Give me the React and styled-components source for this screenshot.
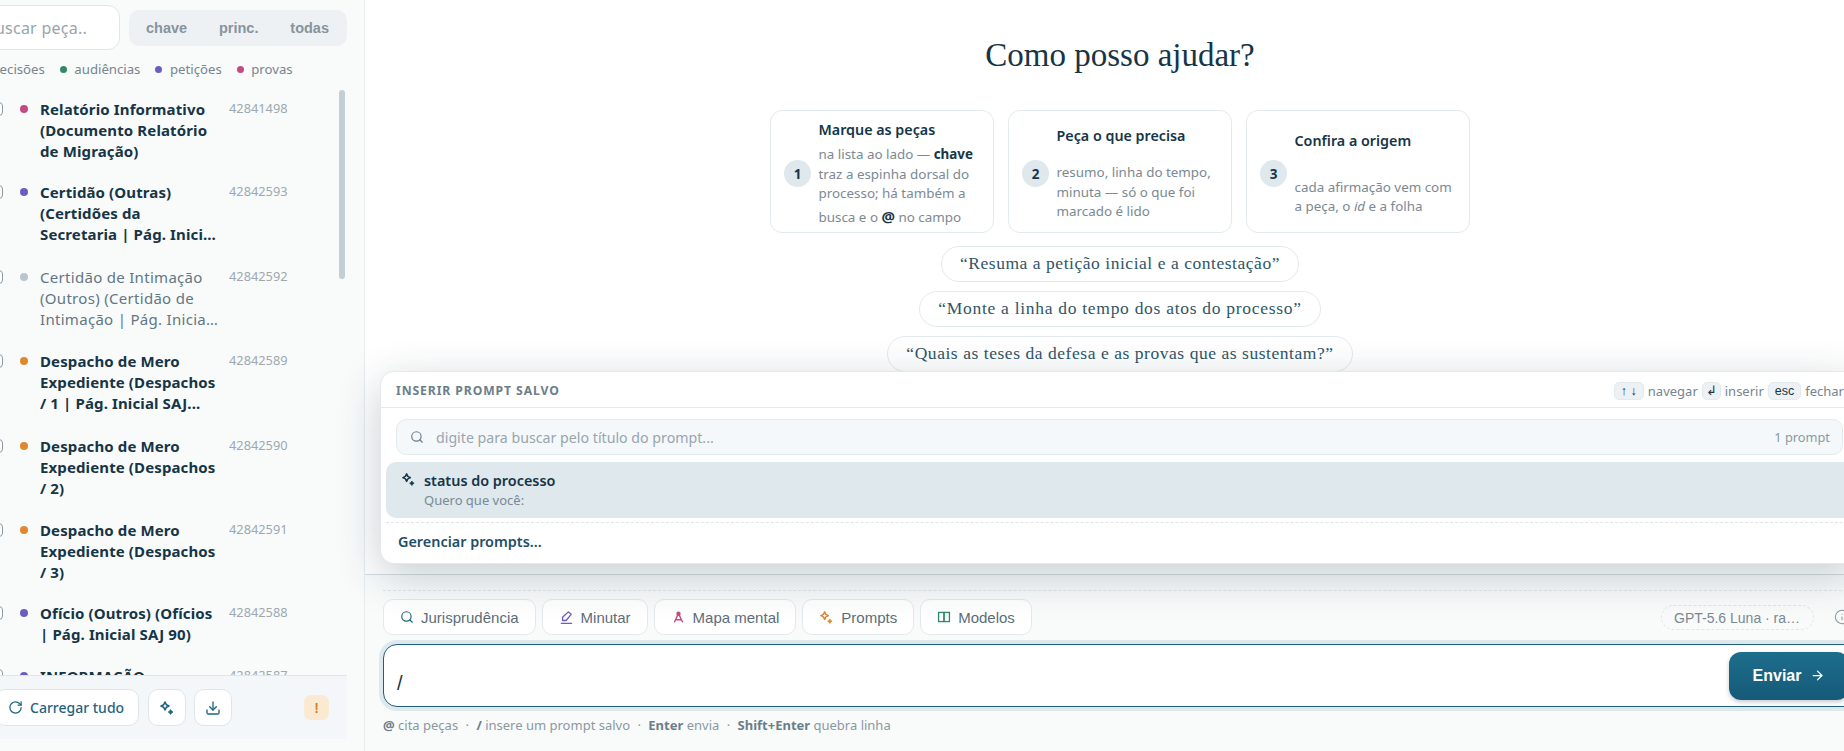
import React from "react";
import styled, { createGlobalStyle } from "styled-components";
import { Search, RotateCw, Download, ArrowRight, Info } from "lucide-react";

const PLEX = `"Noto Sans", "Liberation Sans", sans-serif`;
const ARIAL = `"Liberation Sans", Arial, sans-serif`;
const SERIF = `"Liberation Serif", "Times New Roman", serif`;

const Global = createGlobalStyle`
  html, body { margin: 0; padding: 0; width: 1844px; height: 751px; overflow: hidden; background: #fff; }
  * { box-sizing: border-box; }
`;

const Page = styled.div`
  display: flex;
  width: 1844px;
  height: 751px;
  overflow: hidden;
  font-family: ${PLEX};
  color: #163546;
`;

/* ---------- sidebar ---------- */
const Sidebar = styled.aside`
  flex: 0 0 400px;
  margin-left: -35px;
  height: 751px;
  display: flex;
  flex-direction: column;
  background: #f9fbfb;
  border-right: 1px solid #e6ebee;
  padding: 5px 17px 12px 0;
`;
const SideHead = styled.div`
  display: flex;
  align-items: center;
  gap: 9px;
  padding-left: 10px;
`;
const SearchBox = styled.div`
  width: 145px;
  height: 45px;
  background: #fff;
  border: 1px solid #dfe6ea;
  border-radius: 12px;
  display: flex;
  align-items: center;
  justify-content: flex-end;
  padding-right: 32px;
  font-size: 16px;
  letter-spacing: 0.25px;
  color: #98a5ae;
  white-space: nowrap;
`;
const Segments = styled.div`
  flex: 1;
  height: 36px;
  background: #eef1f4;
  border-radius: 10px;
  display: flex;
  align-items: center;
  justify-content: space-between;
  padding: 0 18px 0 17px;
`;
const Segment = styled.span`
  font-family: ${ARIAL};
  font-size: 14.5px;
  font-weight: 700;
  color: #87949e;
`;
const Legend = styled.div`
  display: flex;
  align-items: center;
  height: 20px;
  margin-top: 9px;
  padding-left: 12px;
  gap: 15px;
  white-space: nowrap;
`;
const LegendItem = styled.span`
  display: inline-flex;
  align-items: center;
  gap: 7.5px;
  font-size: 13.2px;
  color: #76858f;
`;
const Dot = styled.i`
  flex: none;
  display: block;
  width: ${(p) => p.$size || 8}px;
  height: ${(p) => p.$size || 8}px;
  border-radius: 50%;
  background: ${(p) => p.$color};
`;
const List = styled.div`
  position: relative;
  flex: 1;
  margin-top: 7px;
  overflow: hidden;
  min-height: 0;
`;
const Row = styled.div`
  display: grid;
  grid-template-columns: 31px 20px 189px auto;
  padding: 10px 0 0 24px;
  &:first-child { padding-top: 13px; }
  height: ${(p) => p.$h}px;
  align-items: start;
`;
const Check = styled.span`
  width: 14px;
  height: 14px;
  margin-top: 3px;
  border: 1.3px solid #8d99a1;
  border-radius: 4px;
  background: #fff;
`;
const RowDot = styled(Dot)`
  margin-top: 6px;
`;
const RowTitle = styled.div`
  font-size: 15px;
  letter-spacing: ${(p) => (p.$muted ? "0.3px" : "0.12px")};
  line-height: 21.1px;
  font-weight: ${(p) => (p.$muted ? 400 : 700)};
  color: ${(p) => (p.$muted ? "#627683" : "#163546")};
  padding-right: 8px;
  display: -webkit-box;
  -webkit-box-orient: vertical;
  -webkit-line-clamp: 3;
  overflow: hidden;
`;
const RowId = styled.div`
  font-size: 12.8px;
  line-height: 18px;
  color: #9ca9b1;
`;
const Thumb = styled.div`
  position: absolute;
  top: 4px;
  right: 2px;
  width: 6px;
  height: 189px;
  border-radius: 3px;
  background: #c3cfd6;
`;
const SideFoot = styled.div`
  flex: 0 0 64px;
  display: flex;
  align-items: center;
  gap: 8.5px;
  padding: 0 18px 0 30px;
  background: #f4f7f9;
  border-top: 1px solid #dfe6ea;
`;
const FootButton = styled.button`
  height: 37px;
  min-width: 38px;
  padding: 0 ${(p) => (p.$wide ? "14px 0 12px" : "0")};
  display: inline-flex;
  align-items: center;
  justify-content: center;
  gap: 7px;
  background: #fff;
  border: 1px solid #dfe6ea;
  border-radius: 10px;
  color: #1f6482;
  font-family: ${PLEX};
  font-size: 14px;
  font-weight: 500;
`;
const Warn = styled.span`
  width: 25px;
  height: 25px;
  margin-left: auto;
  border-radius: 7px;
  background: #fbe9d2;
  color: #d6852b;
  font-family: ${ARIAL};
  font-size: 14px;
  font-weight: 700;
  display: flex;
  align-items: center;
  justify-content: center;
`;

/* ---------- main ---------- */
const Main = styled.main`
  position: relative;
  flex: 0 0 1510px;
  height: 751px;
  display: flex;
  flex-direction: column;
  background: #fff;
`;
const Hero = styled.section`
  flex: 1;
  min-height: 0;
  display: flex;
  flex-direction: column;
  align-items: center;
  padding-top: 35px;
`;
const Title = styled.h1`
  margin: 0;
  font-family: ${SERIF};
  font-size: 33px;
  line-height: 40px;
  font-weight: 400;
  color: #163546;
`;
const Cards = styled.div`
  display: grid;
  grid-template-columns: repeat(3, 224px);
  gap: 14px;
  margin-top: 35px;
`;
const Card = styled.div`
  display: grid;
  grid-template-columns: 27px 1fr;
  column-gap: 7.5px;
  row-gap: 5px;
  align-items: center;
  padding: 9px 12px 4px 13px;
  border: 1px solid #e3eaee;
  border-radius: 12px;
  background: #fff;
`;
const CardNum = styled.span`
  grid-row: 1 / span 2;
  width: 27px;
  height: 27px;
  border-radius: 50%;
  background: #dee8ed;
  color: #163546;
  font-size: 13.5px;
  font-weight: 700;
  display: flex;
  align-items: center;
  justify-content: center;
`;
const CardTitle = styled.div`
  font-size: 14.3px;
  line-height: 20px;
  font-weight: 600;
  color: #163546;
`;
const CardBody = styled.div`
  font-size: 13.4px;
  line-height: 19.5px;
  color: #7a8993;
  b { color: #163546; font-weight: 700; }
  em { font-style: italic; }
`;
const At = styled.b`
  font-size: 15px;
  line-height: 24px;
`;
const Chips = styled.div`
  display: flex;
  flex-direction: column;
  align-items: center;
  gap: 9px;
  margin-top: 13px;
`;
const Chip = styled.div`
  height: 36px;
  padding: 0 18px;
  display: flex;
  align-items: center;
  border: 1px solid #e3eaee;
  border-radius: 18px;
  background: #fff;
  font-family: ${SERIF};
  font-size: 17.5px;
  letter-spacing: ${(p) => p.$track}px;
  color: #2f5668;
  white-space: nowrap;
`;

/* ---------- popup ---------- */
const Popup = styled.div`
  position: absolute;
  left: 15px;
  right: 16px;
  bottom: 187px;
  height: 193px;
  background: #fff;
  border: 1px solid #e3eaee;
  border-radius: 14px;
  box-shadow: 0 12px 44px rgba(20, 45, 60, 0.24);
  display: flex;
  flex-direction: column;
  z-index: 5;
`;
const PopHead = styled.div`
  flex: 0 0 36px;
  display: flex;
  align-items: center;
  justify-content: space-between;
  padding: 2px 14px 0 15px;
  border-bottom: 1px solid #e3eaee;
`;
const PopLabel = styled.div`
  font-size: 12.2px;
  font-weight: 700;
  letter-spacing: 0.9px;
  color: #6b7e8a;
`;
const Hints = styled.div`
  display: flex;
  align-items: center;
  gap: 4px;
  font-size: 13px;
  color: #748590;
`;
const Kbd = styled.kbd`
  height: 18px;
  padding: 0 ${(p) => p.$pad || 6}px;
  display: inline-flex;
  align-items: center;
  gap: 4px;
  background: #edf1f4;
  border: 1px solid #e3eaee;
  border-radius: 5px;
  font-family: ${ARIAL};
  font-size: 12.5px;
  color: #163546;
`;
const PopSearch = styled.div`
  flex: 0 0 36px;
  margin: 11px 15px 0 15px;
  display: flex;
  align-items: center;
  gap: 12px;
  padding: 0 12px 0 13px;
  background: #f5f8fa;
  border: 1px solid #e3eaee;
  border-radius: 10px;
  font-size: 14.2px;
  color: #98a5ae;
  svg { color: #6b7e8a; flex: none; }
`;
const Count = styled.span`
  margin-left: auto;
  font-size: 12.8px;
  color: #8a98a2;
`;
const PromptItem = styled.div`
  flex: 0 0 56px;
  margin: 7px 5px 0 5px;
  display: grid;
  grid-template-columns: 23px 1fr;
  padding: 9px 0 0 15px;
  background: #dee8ed;
  border-radius: 10px;
`;
const ItemIcon = styled.span`
  color: #163546;
  margin-top: 1px;
  line-height: 0;
`;
const ItemTitle = styled.div`
  font-size: 14.4px;
  line-height: 20px;
  font-weight: 600;
  color: #163546;
`;
const ItemSub = styled.div`
  font-size: 13px;
  line-height: 18px;
  color: #7a8993;
`;
const Manage = styled.div`
  flex: 1;
  margin: 4px 5px 0 5px;
  padding: 0 0 4px 12px;
  display: flex;
  align-items: center;
  border-top: 1px dashed #dfe6ea;
  font-size: 14.4px;
  font-weight: 600;
  color: #1f4f66;
`;

/* ---------- composer ---------- */
const Composer = styled.footer`
  flex: 0 0 177px;
  padding: 15px 18px 0;
  background: #f9fbfb;
  border-top: 1px solid #d4dce1;
  display: flex;
  flex-direction: column;
`;
const Tools = styled.div`
  border-top: 1px dashed #dfe6ea;
  padding-top: 8px;
  display: flex;
  align-items: flex-start;
  gap: 6px;
  height: 54px;
`;
const Tool = styled.button`
  height: 36px;
  padding: 0 16px;
  display: inline-flex;
  align-items: center;
  gap: 7px;
  background: #fff;
  border: 1px solid #e3eaee;
  border-radius: 10px;
  font-family: ${ARIAL};
  font-size: 15px;
  color: #5c6e7a;
  svg { flex: none; color: ${(p) => p.$tone}; }
`;
const ModelPill = styled.span`
  margin: 6px 0 0 auto;
  width: 153px;
  height: 25px;
  display: flex;
  align-items: center;
  padding: 0 12px;
  border: 1px dashed #dfe6ea;
  border-radius: 13px;
  font-family: ${ARIAL};
  font-size: 14px;
  color: #7a8993;
  white-space: nowrap;
`;
const InfoWrap = styled.span`
  margin: 10px 7px 0 14px;
  line-height: 0;
  color: #8d99a1;
`;
const InputBox = styled.div`
  height: 63px;
  display: flex;
  align-items: center;
  justify-content: space-between;
  padding: 0 7px 0 13px;
  background: #fff;
  border: 1.5px solid #1d5f7d;
  border-radius: 14px;
  box-shadow: 0 0 0 4px #dee8ed;
  color: #163546;
`;
const Slash = styled.span`
  font-family: ${ARIAL};
  font-size: 20px;
  padding-top: 15px;
`;
const Send = styled.button`
  width: 120px;
  height: 48px;
  border: 0;
  border-radius: 12px;
  background: linear-gradient(180deg, #1e6d8c, #155a78);
  box-shadow: 0 2px 4px rgba(20, 45, 60, 0.25);
  color: #fff;
  font-family: ${ARIAL};
  font-size: 16px;
  font-weight: 700;
  display: flex;
  align-items: center;
  justify-content: center;
  gap: 9px;
`;
const Help = styled.div`
  margin-top: 9px;
  font-size: 13px;
  line-height: 18px;
  color: #8a98a2;
  b { font-weight: 700; color: #6b7e8a; }
  i { font-style: normal; margin: 0 7.4px; }
`;

/* ---------- drawn icons ---------- */
const Sparkle = ({ size = 16 }) => (
  <svg width={size} height={size} viewBox="0 0 16 16" fill="none" stroke="currentColor" strokeWidth="1.6" strokeLinejoin="round">
    <path d="M6 2 7.3 4.7 10 6 7.3 7.3 6 10 4.7 7.3 2 6 4.7 4.7Z" />
    <path d="M11.6 9.6 12.5 11.1 14 12 12.5 12.9 11.6 14.4 10.7 12.9 9.2 12 10.7 11.1Z" fill="currentColor" strokeWidth="0.8" />
  </svg>
);
const PenIcon = () => (
  <svg width="15" height="15" viewBox="0 0 16 16" fill="none" stroke="currentColor" strokeWidth="1.4" strokeLinejoin="round" strokeLinecap="round">
    <path d="M10 2 13 4.6 7.6 11.2H3.8V7.8Z" />
    <path d="M2.5 14.2h11" />
  </svg>
);
const MapIcon = () => (
  <svg width="15" height="15" viewBox="0 0 16 16" fill="none" stroke="currentColor" strokeWidth="1.5" strokeLinecap="round">
    <circle cx="8" cy="4" r="1.6" fill="currentColor" />
    <path d="M7.4 5 3.8 12.6M8.6 5l3.6 7.6M4.8 10.4h6.4" />
  </svg>
);
const BookIcon = () => (
  <svg width="14" height="14" viewBox="0 0 16 16" fill="none" stroke="currentColor" strokeWidth="1.5">
    <rect x="1.8" y="2.8" width="6.2" height="10.4" />
    <rect x="8" y="2.8" width="6.2" height="10.4" />
  </svg>
);

const legend = [
  ["decisões", "#d6852b"],
  ["audiências", "#2e8b66"],
  ["petições", "#6b5cc4"],
  ["provas", "#c44a85"],
];

const rows = [
  { h: 85.5, dot: "#c44a85", id: "42841498", t: "Relatório Informativo (Documento Relatório de Migração)" },
  { h: 85, dot: "#6b5cc4", id: "42842593", t: "Certidão (Outras) (Certidões da Secretaria | Pág. Inicial SAJ 12)" },
  { h: 84, dot: "#b9c5cd", id: "42842592", muted: true, t: "Certidão de Intimação (Outros) (Certidão de Intimação | Pág. Inicial SAJ 14)" },
  { h: 85, dot: "#e0882f", id: "42842589", t: "Despacho de Mero Expediente (Despachos / 1 | Pág. Inicial SAJ..." },
  { h: 84, dot: "#e0882f", id: "42842590", t: "Despacho de Mero Expediente (Despachos / 2)" },
  { h: 83, dot: "#e0882f", id: "42842591", t: "Despacho de Mero Expediente (Despachos / 3)" },
  { h: 63, dot: "#6b5cc4", id: "42842588", t: "Ofício (Outros) (Ofícios | Pág. Inicial SAJ 90)" },
  { h: 84, dot: "#6b5cc4", id: "42842587", t: "INFORMAÇÃO" },
];

const tools = [
  ["Jurisprudência", "#1f6482", <Search size={14} strokeWidth={2} key="s" />],
  ["Minutar", "#6b5cc4", <PenIcon key="p" />],
  ["Mapa mental", "#c44a85", <MapIcon key="m" />],
  ["Prompts", "#e0882f", <Sparkle size={15} key="k" />],
  ["Modelos", "#2e8b66", <BookIcon key="b" />],
];

export default function App() {
  return (
    <Page>
      <Global />
      <Sidebar>
        <SideHead>
          <SearchBox>Buscar peça..</SearchBox>
          <Segments>
            <Segment>chave</Segment>
            <Segment>princ.</Segment>
            <Segment>todas</Segment>
          </Segments>
        </SideHead>
        <Legend>
          {legend.map(([label, color]) => (
            <LegendItem key={label}>
              <Dot $size={7} $color={color} />
              {label}
            </LegendItem>
          ))}
        </Legend>
        <List>
          {rows.map((r) => (
            <Row key={r.id} $h={r.h}>
              <Check />
              <RowDot $color={r.dot} />
              <RowTitle $muted={r.muted}>{r.t}</RowTitle>
              <RowId>{r.id}</RowId>
            </Row>
          ))}
          <Thumb />
        </List>
        <SideFoot>
          <FootButton $wide>
            <RotateCw size={15} strokeWidth={2} />
            Carregar tudo
          </FootButton>
          <FootButton>
            <Sparkle size={16} />
          </FootButton>
          <FootButton>
            <Download size={16} strokeWidth={2} />
          </FootButton>
          <Warn>!</Warn>
        </SideFoot>
      </Sidebar>
      <Main>
        <Hero>
          <Title>Como posso ajudar?</Title>
          <Cards>
            <Card>
              <CardNum>1</CardNum>
              <CardTitle>Marque as peças</CardTitle>
              <CardBody>
                na lista ao lado — <b>chave</b> traz a espinha dorsal do processo; há também a busca e o <At>@</At> no campo
              </CardBody>
            </Card>
            <Card>
              <CardNum>2</CardNum>
              <CardTitle>Peça o que precisa</CardTitle>
              <CardBody>resumo, linha do tempo, minuta — só o que foi marcado é lido</CardBody>
            </Card>
            <Card>
              <CardNum>3</CardNum>
              <CardTitle>Confira a origem</CardTitle>
              <CardBody>
                cada afirmação vem com a peça, o <em>id</em> e a folha
              </CardBody>
            </Card>
          </Cards>
          <Chips>
            <Chip $track={0.54}>“Resuma a petição inicial e a contestação”</Chip>
            <Chip $track={0.71}>“Monte a linha do tempo dos atos do processo”</Chip>
            <Chip $track={0.55}>“Quais as teses da defesa e as provas que as sustentam?”</Chip>
          </Chips>
        </Hero>
        <Popup>
          <PopHead>
            <PopLabel>INSERIR PROMPT SALVO</PopLabel>
            <Hints>
              <Kbd>↑ ↓</Kbd> navegar <Kbd $pad={3}>↲</Kbd> inserir <Kbd>esc</Kbd> fechar
            </Hints>
          </PopHead>
          <PopSearch>
            <Search size={14} strokeWidth={2} />
            digite para buscar pelo título do prompt...
            <Count>1 prompt</Count>
          </PopSearch>
          <PromptItem>
            <ItemIcon>
              <Sparkle size={15} />
            </ItemIcon>
            <div>
              <ItemTitle>status do processo</ItemTitle>
              <ItemSub>Quero que você:</ItemSub>
            </div>
          </PromptItem>
          <Manage>Gerenciar prompts...</Manage>
        </Popup>
        <Composer>
          <Tools>
            {tools.map(([label, tone, icon]) => (
              <Tool key={label} $tone={tone}>
                {icon}
                {label}
              </Tool>
            ))}
            <ModelPill>GPT-5.6 Luna · ra…</ModelPill>
            <InfoWrap>
              <Info size={16} strokeWidth={1.6} />
            </InfoWrap>
          </Tools>
          <InputBox>
            <Slash>/</Slash>
            <Send>
              Enviar <ArrowRight size={15} strokeWidth={2} />
            </Send>
          </InputBox>
          <Help>
            <b>@</b> cita peças<i>·</i><b>/</b> insere um prompt salvo<i>·</i><b>Enter</b> envia<i>·</i>
            <b>Shift+Enter</b> quebra linha
          </Help>
        </Composer>
      </Main>
    </Page>
  );
}
